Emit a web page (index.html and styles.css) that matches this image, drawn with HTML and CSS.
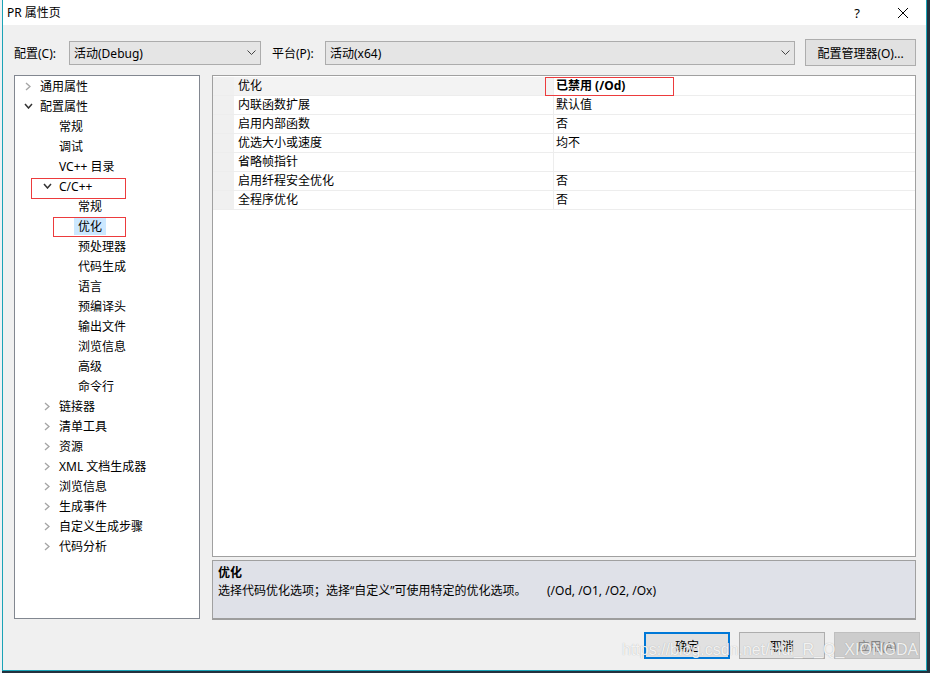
FILE: index.html
```html
<!DOCTYPE html>
<html lang="zh-CN">

<head>
    <meta charset="UTF-8">
    <title>PR 属性页</title>
    <link rel="stylesheet" href="styles.css">
</head>

<body>
    <div class="window">
        <div class="titlebar">
            <span class="title">PR 属性页</span>
            <span class="caption-btn">?</span>
            <span class="caption-btn">
                <svg width="10" height="10" viewBox="0 0 10 10"><path d="M0 0L10 10M10 0L0 10" stroke="#000" stroke-width="1" fill="none"/></svg>
            </span>
        </div>

        <div class="client">
            <div class="toolbar">
                <span class="field-label label-config">配置(C):</span>
                <div class="combo combo-config">
                    <span>活动(Debug)</span>
                    <svg width="9" height="5" viewBox="0 0 9 5"><path d="M0.5 0.5L4.5 4.5L8.5 0.5" stroke="#444" fill="none"/></svg>
                </div>
                <span class="field-label label-platform">平台(P):</span>
                <div class="combo combo-platform">
                    <span>活动(x64)</span>
                    <svg width="9" height="5" viewBox="0 0 9 5"><path d="M0.5 0.5L4.5 4.5L8.5 0.5" stroke="#444" fill="none"/></svg>
                </div>
                <button class="btn btn-manager">配置管理器(O)...</button>
            </div>

            <div class="main">
                <!-- left tree -->
                <div class="tree">
                    <div class="node lv0"><span class="twisty"><svg width="6" height="9" viewBox="0 0 6 9"><path d="M1 1L5 4.5L1 8" stroke="#a6a6a6" stroke-width="1.4" fill="none"/></svg></span><span class="label">通用属性</span></div>
                    <div class="node lv0"><span class="twisty"><svg width="9" height="6" viewBox="0 0 9 6"><path d="M1 1L4.5 5L8 1" stroke="#333" stroke-width="1.5" fill="none"/></svg></span><span class="label">配置属性</span></div>
                    <div class="node lv1"><span class="twisty"></span><span class="label">常规</span></div>
                    <div class="node lv1"><span class="twisty"></span><span class="label">调试</span></div>
                    <div class="node lv1"><span class="twisty"></span><span class="label">VC++ 目录</span></div>
                    <div class="node lv1"><span class="twisty"><svg width="9" height="6" viewBox="0 0 9 6"><path d="M1 1L4.5 5L8 1" stroke="#333" stroke-width="1.5" fill="none"/></svg></span><span class="label">C/C++</span><span class="mark mark-cpp"></span></div>
                    <div class="node lv2"><span class="twisty"></span><span class="label">常规</span></div>
                    <div class="node lv2"><span class="twisty"></span><span class="label selected">优化</span><span class="mark mark-opt"></span></div>
                    <div class="node lv2"><span class="twisty"></span><span class="label">预处理器</span></div>
                    <div class="node lv2"><span class="twisty"></span><span class="label">代码生成</span></div>
                    <div class="node lv2"><span class="twisty"></span><span class="label">语言</span></div>
                    <div class="node lv2"><span class="twisty"></span><span class="label">预编译头</span></div>
                    <div class="node lv2"><span class="twisty"></span><span class="label">输出文件</span></div>
                    <div class="node lv2"><span class="twisty"></span><span class="label">浏览信息</span></div>
                    <div class="node lv2"><span class="twisty"></span><span class="label">高级</span></div>
                    <div class="node lv2"><span class="twisty"></span><span class="label">命令行</span></div>
                    <div class="node lv1"><span class="twisty"><svg width="6" height="9" viewBox="0 0 6 9"><path d="M1 1L5 4.5L1 8" stroke="#a6a6a6" stroke-width="1.4" fill="none"/></svg></span><span class="label">链接器</span></div>
                    <div class="node lv1"><span class="twisty"><svg width="6" height="9" viewBox="0 0 6 9"><path d="M1 1L5 4.5L1 8" stroke="#a6a6a6" stroke-width="1.4" fill="none"/></svg></span><span class="label">清单工具</span></div>
                    <div class="node lv1"><span class="twisty"><svg width="6" height="9" viewBox="0 0 6 9"><path d="M1 1L5 4.5L1 8" stroke="#a6a6a6" stroke-width="1.4" fill="none"/></svg></span><span class="label">资源</span></div>
                    <div class="node lv1"><span class="twisty"><svg width="6" height="9" viewBox="0 0 6 9"><path d="M1 1L5 4.5L1 8" stroke="#a6a6a6" stroke-width="1.4" fill="none"/></svg></span><span class="label">XML 文档生成器</span></div>
                    <div class="node lv1"><span class="twisty"><svg width="6" height="9" viewBox="0 0 6 9"><path d="M1 1L5 4.5L1 8" stroke="#a6a6a6" stroke-width="1.4" fill="none"/></svg></span><span class="label">浏览信息</span></div>
                    <div class="node lv1"><span class="twisty"><svg width="6" height="9" viewBox="0 0 6 9"><path d="M1 1L5 4.5L1 8" stroke="#a6a6a6" stroke-width="1.4" fill="none"/></svg></span><span class="label">生成事件</span></div>
                    <div class="node lv1"><span class="twisty"><svg width="6" height="9" viewBox="0 0 6 9"><path d="M1 1L5 4.5L1 8" stroke="#a6a6a6" stroke-width="1.4" fill="none"/></svg></span><span class="label">自定义生成步骤</span></div>
                    <div class="node lv1"><span class="twisty"><svg width="6" height="9" viewBox="0 0 6 9"><path d="M1 1L5 4.5L1 8" stroke="#a6a6a6" stroke-width="1.4" fill="none"/></svg></span><span class="label">代码分析</span></div>
                </div>

                <!-- property grid + description -->
                <div class="right">
                    <div class="grid">
                        <div class="row current">
                            <span class="gutter"></span>
                            <span class="name">优化</span>
                            <span class="value strong">已禁用 (/Od)</span>
                            <span class="mark mark-value"></span>
                        </div>
                        <div class="row">
                            <span class="gutter"></span>
                            <span class="name">内联函数扩展</span>
                            <span class="value">默认值</span>
                        </div>
                        <div class="row">
                            <span class="gutter"></span>
                            <span class="name">启用内部函数</span>
                            <span class="value">否</span>
                        </div>
                        <div class="row">
                            <span class="gutter"></span>
                            <span class="name">优选大小或速度</span>
                            <span class="value">均不</span>
                        </div>
                        <div class="row">
                            <span class="gutter"></span>
                            <span class="name">省略帧指针</span>
                            <span class="value"></span>
                        </div>
                        <div class="row">
                            <span class="gutter"></span>
                            <span class="name">启用纤程安全优化</span>
                            <span class="value">否</span>
                        </div>
                        <div class="row">
                            <span class="gutter"></span>
                            <span class="name">全程序优化</span>
                            <span class="value">否</span>
                        </div>
                    </div>
                    <div class="desc">
                        <div class="desc-title">优化</div>
                        <div class="desc-text"><span class="desc-main">选择代码优化选项；选择“自定义”可使用特定的优化选项。</span><span>(/Od, /O1, /O2, /Ox)</span></div>
                    </div>
                </div>
            </div>

            <div class="footer">
                <button class="btn btn-default">确定</button>
                <button class="btn">取消</button>
                <button class="btn" disabled>应用(A)</button>
            </div>
        </div>

        <div class="watermark">https://blog.csdn.net/Hui_R_Q_XIONGDA</div>
    </div>
</body>

</html>
```

FILE: styles.css
```css
:root {
    --window-edge: #1ba3b6;
    --face: #f0f0f0;
    --panel-border: #a0a0a0;
    --mark-red: #ec3b3d;
}

html,
body {
    margin: 0;
    padding: 0;
    height: 673px;
    overflow: hidden;
}

body {
    background: linear-gradient(to right, #eef1f4 2px, #23313e 2px);
    font-family: "Noto Sans", "Noto Sans CJK SC", sans-serif;
    font-size: 12px;
    color: #000;
}

.window {
    position: relative;
    box-sizing: border-box;
    width: 925px;
    height: 671px;
    margin-left: 2px;
    border: 1px solid var(--window-edge);
    border-top: 0;
    background: var(--face);
    display: flex;
    flex-direction: column;
}

/* title bar */
.titlebar {
    height: 25px;
    background: #fff;
    display: flex;
    align-items: center;
    padding-left: 4px;
}

.title {
    flex: 1;
    line-height: 25px;
}

.caption-btn {
    width: 46px;
    height: 25px;
    display: flex;
    align-items: center;
    justify-content: center;
    font-size: 13px;
}

/* client area */
.client {
    flex: 1;
    padding: 14px 10px 0 11px;
    display: flex;
    flex-direction: column;
}

.toolbar {
    height: 27px;
    display: flex;
    align-items: center;
}

.field-label {
    white-space: nowrap;
}

.label-config {
    width: 55px;
}

.label-platform {
    width: 53px;
    margin-left: 11px;
}

.combo {
    box-sizing: border-box;
    height: 24px;
    background: #e5e5e5;
    border: 1px solid #acacac;
    display: flex;
    align-items: center;
    justify-content: space-between;
    padding: 0 4px 0 4px;
}

.combo-config {
    width: 192px;
}

.combo-platform {
    width: 470px;
}

.btn {
    box-sizing: border-box;
    font-family: inherit;
    font-size: 12px;
    background: #e1e1e1;
    border: 1px solid #adadad;
    color: #000;
    padding: 0;
    height: 27px;
    width: 86px;
}

.btn-manager {
    width: 111px;
    margin-left: 10px;
}

.btn-default {
    border: 2px solid #0078d7;
}

.btn:disabled {
    background: #cccccc;
    border-color: #bfbfbf;
    color: #838383;
}

/* main area */
.main {
    margin-top: 9px;
    height: 545px;
    display: flex;
    gap: 12px;
}

.tree {
    box-sizing: border-box;
    width: 186px;
    height: 544px;
    background: #fff;
    border: 1px solid #828790;
}

.node {
    position: relative;
    height: 20px;
    display: flex;
    align-items: center;
    white-space: nowrap;
}

.lv0 {
    padding-left: 5px;
}

.lv1 {
    padding-left: 24px;
}

.lv2 {
    padding-left: 43px;
}

.twisty {
    width: 16px;
    display: flex;
    align-items: center;
    justify-content: center;
}

.label {
    padding: 0 4px;
    line-height: 17px;
}

.selected {
    background: #cce8ff;
}

/* red annotation boxes drawn over the screenshot */
.mark {
    position: absolute;
    box-sizing: border-box;
    border: 1px solid var(--mark-red);
}

.mark-cpp {
    left: 16px;
    top: 2px;
    width: 95px;
    height: 21px;
}

.mark-opt {
    left: 38px;
    top: 1px;
    width: 73px;
    height: 20px;
}

.mark-value {
    left: 332px;
    top: 0;
    width: 129px;
    height: 19px;
}

.right {
    width: 704px;
    display: flex;
    flex-direction: column;
}

.grid {
    box-sizing: border-box;
    height: 482px;
    background: #fff;
    border: 1px solid var(--panel-border);
    padding-top: 1px;
}

.row {
    position: relative;
    box-sizing: border-box;
    height: 19px;
    display: flex;
    border-bottom: 1px solid #ededed;
    line-height: 18px;
}

.gutter {
    width: 21px;
    background: var(--face);
}

.name {
    box-sizing: border-box;
    width: 320px;
    padding-left: 4px;
    border-right: 1px solid #ededed;
}

.current .name {
    background: #f3f3f3;
}

.value {
    flex: 1;
    padding-left: 2px;
}

.strong {
    font-weight: bold;
}

.desc {
    box-sizing: border-box;
    margin-top: 3px;
    height: 60px;
    background: #dfe1e8;
    border: 1px solid var(--panel-border);
    border-bottom: 2px solid #9d9d9d;
    padding: 3px 5px 0;
    line-height: 18px;
}

.desc-title {
    font-weight: bold;
}

.desc-main {
    display: inline-block;
    width: 329px;
}

/* buttons */
.footer {
    margin-top: 12px;
    margin-right: -4px;
    display: flex;
    justify-content: flex-end;
    gap: 9px;
}

.watermark {
    position: absolute;
    left: 619px;
    top: 641px;
    font-family: "Liberation Sans", Arial, sans-serif;
    font-size: 16px;
    color: rgba(255, 255, 255, 0.85);
    text-shadow: 0 0 1px rgba(90, 90, 90, 0.45);
    white-space: nowrap;
}
```
